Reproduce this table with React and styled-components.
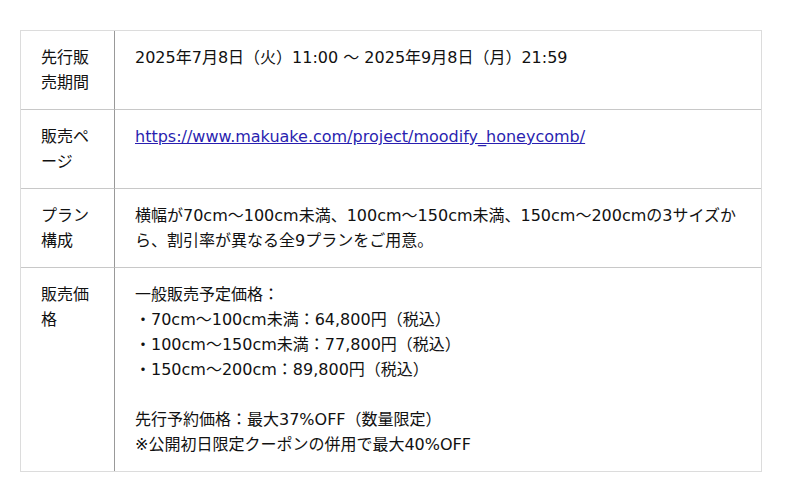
import React from "react";
import styled, { createGlobalStyle } from "styled-components";

const Global = createGlobalStyle`
  html, body { margin: 0; padding: 0; background: #fff; }
  body { font-family: "DejaVu Sans", "Noto Sans CJK JP", sans-serif; color: #111; }
`;

const Page = styled.div`
  padding: 30px 38px 0 20px;
`;

const Table = styled.div`
  display: grid;
  grid-template-columns: 94px 1fr;
  border: 1px solid #dcdcdc;
  font-size: 16px;
  line-height: 25px;
`;

const Label = styled.div`
  padding: 14px 20px;
  border-right: 1px solid #999;
  border-bottom: ${(p) => (p.$last ? "none" : "1px solid #c8c8c8")};
`;

const Value = styled.div`
  padding: 14px 20px;
  border-bottom: ${(p) => (p.$last ? "none" : "1px solid #c8c8c8")};
`;

const Link = styled.a`
  color: #2a1fb0;
  text-decoration: underline;
`;

const Line = styled.div`
  min-height: 25px;
`;

export default function App() {
  return (
    <>
      <Global />
      <Page>
        <Table>
          <Label>先行販売期間</Label>
          <Value>2025年7月8日（火）11:00 〜 2025年9月8日（月）21:59</Value>
          <Label>販売ページ</Label>
          <Value>
            <Link href="#">https://www.makuake.com/project/moodify_honeycomb/</Link>
          </Value>
          <Label>プラン構成</Label>
          <Value>
            横幅が70cm〜100cm未満、100cm〜150cm未満、150cm〜200cmの3サイズから、割引率が異なる全9プランをご用意。
          </Value>
          <Label $last>販売価格</Label>
          <Value $last>
            <Line>一般販売予定価格：</Line>
            <Line>・70cm〜100cm未満：64,800円（税込）</Line>
            <Line>・100cm〜150cm未満：77,800円（税込）</Line>
            <Line>・150cm〜200cm：89,800円（税込）</Line>
            <Line />
            <Line>先行予約価格：最大37%OFF（数量限定）</Line>
            <Line>※公開初日限定クーポンの併用で最大40%OFF</Line>
          </Value>
        </Table>
      </Page>
    </>
  );
}
